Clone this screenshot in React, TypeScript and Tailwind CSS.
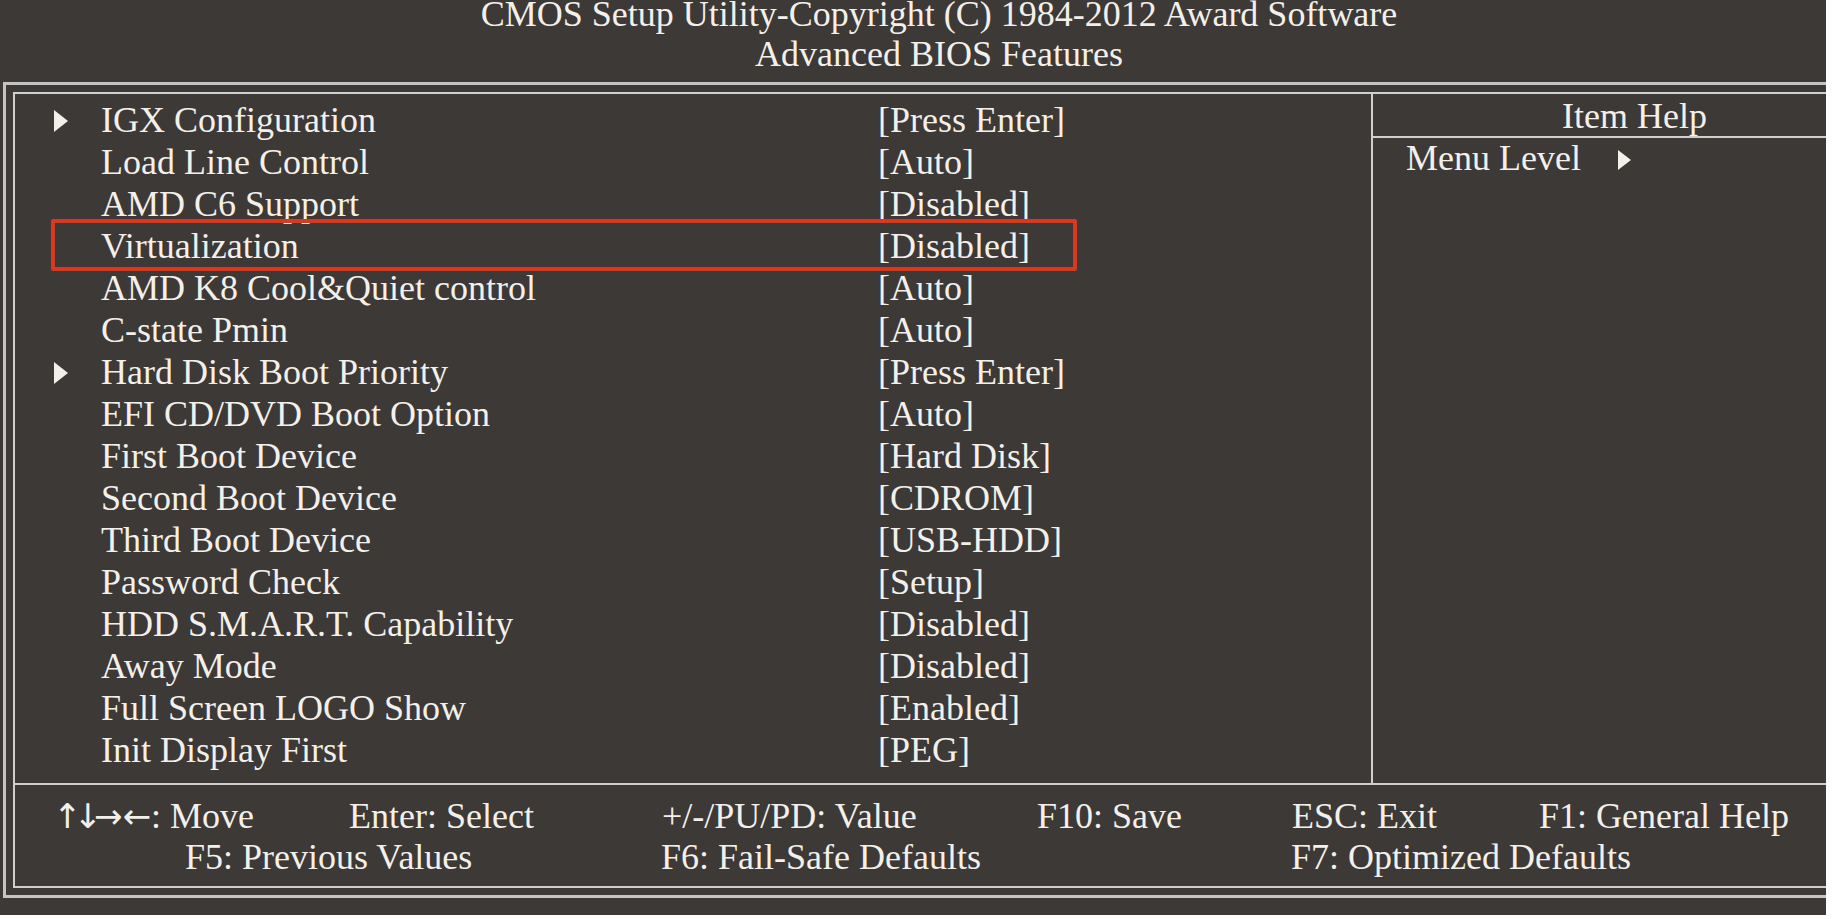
const ROWS: { label: string; value: string; sub?: boolean; hl?: boolean }[] = [
  { label: "IGX Configuration", value: "[Press Enter]", sub: true },
  { label: "Load Line Control", value: "[Auto]" },
  { label: "AMD C6 Support", value: "[Disabled]" },
  { label: "Virtualization", value: "[Disabled]", hl: true },
  { label: "AMD K8 Cool&Quiet control", value: "[Auto]" },
  { label: "C-state Pmin", value: "[Auto]" },
  { label: "Hard Disk Boot Priority", value: "[Press Enter]", sub: true },
  { label: "EFI CD/DVD Boot Option", value: "[Auto]" },
  { label: "First Boot Device", value: "[Hard Disk]" },
  { label: "Second Boot Device", value: "[CDROM]" },
  { label: "Third Boot Device", value: "[USB-HDD]" },
  { label: "Password Check", value: "[Setup]" },
  { label: "HDD S.M.A.R.T. Capability", value: "[Disabled]" },
  { label: "Away Mode", value: "[Disabled]" },
  { label: "Full Screen LOGO Show", value: "[Enabled]" },
  { label: "Init Display First", value: "[PEG]" },
];

function Arrow({ w = 14, h = 22 }: { w?: number; h?: number }) {
  return (
    <svg width={w} height={h} viewBox={`0 0 ${w} ${h}`} className="block">
      <polygon points={`0,0 ${w},${h / 2} 0,${h}`} fill="#f3f0eb" />
    </svg>
  );
}

export default function App() {
  return (
    <div className="h-[919px] w-[1832px] bg-white">
      <div className="h-[915px] w-[1826px] overflow-hidden bg-[#3d3937] font-['Liberation_Serif','Times_New_Roman',serif] text-[36px] text-[#f3f0eb]">
        {/* title */}
        <div className="-mt-[6px] w-[1878px] text-center leading-[40px]">
          <div>CMOS Setup Utility-Copyright (C) 1984-2012 Award Software</div>
          <div>Advanced BIOS Features</div>
        </div>

        {/* double frame */}
        <div className="mt-[8px] ml-[3px] w-[1905px] border-[3px] border-[#c4c4c4] p-[7px]">
          <div className="w-[1885px] border-2 border-[#cfcfcf]">
            <div className="flex h-[689px]">
              {/* settings list */}
              <div className="w-[1358px] border-r-2 border-[#cfcfcf] pt-[4.5px]">
                {ROWS.map((row) => (
                  <div key={row.label} className="relative flex h-[42px] leading-[42px]">
                    <div className="w-[86px] pt-[11.5px] pl-[39px]">{row.sub && <Arrow />}</div>
                    <div className="w-[777px] whitespace-nowrap">{row.label}</div>
                    <div className="whitespace-nowrap">{row.value}</div>
                    {row.hl && (
                      <div className="pointer-events-none absolute top-[-6px] left-[36px] h-[52px] w-[1026px] rounded-[2px] border-4 border-[#d93a1f]" />
                    )}
                  </div>
                ))}
              </div>

              {/* item help */}
              <div className="w-[523px]">
                <div className="border-b-2 border-[#cfcfcf] pt-[4px] pb-[2px] text-center leading-[36px]">Item Help</div>
                <div className="flex items-start pt-[2px] pl-[33px] leading-[36px]">
                  <span>Menu Level</span>
                  <div className="ml-[37px] pt-[10px]">
                    <Arrow w={13} h={20} />
                  </div>
                </div>
              </div>
            </div>

            {/* key legend */}
            <div className="border-t-2 border-[#cfcfcf] pt-[11px] pb-[8px] leading-[41px] whitespace-nowrap">
              <div className="flex pl-[38px]">
                <span className="w-[296px]">
                  <span className="font-['DejaVu_Sans',sans-serif] text-[34px] leading-[0]">
                    <span className="tracking-[-8px]">↑↓</span>
                    <span>→←</span>
                  </span>
                  : Move
                </span>
                <span className="w-[313px]">Enter: Select</span>
                <span className="w-[375px]">+/-/PU/PD: Value</span>
                <span className="w-[255px]">F10: Save</span>
                <span className="w-[247px]">ESC: Exit</span>
                <span>F1: General Help</span>
              </div>
              <div className="flex pl-[170px]">
                <span className="w-[476px]">F5: Previous Values</span>
                <span className="w-[630px]">F6: Fail-Safe Defaults</span>
                <span>F7: Optimized Defaults</span>
              </div>
            </div>
          </div>
        </div>
      </div>
    </div>
  );
}
